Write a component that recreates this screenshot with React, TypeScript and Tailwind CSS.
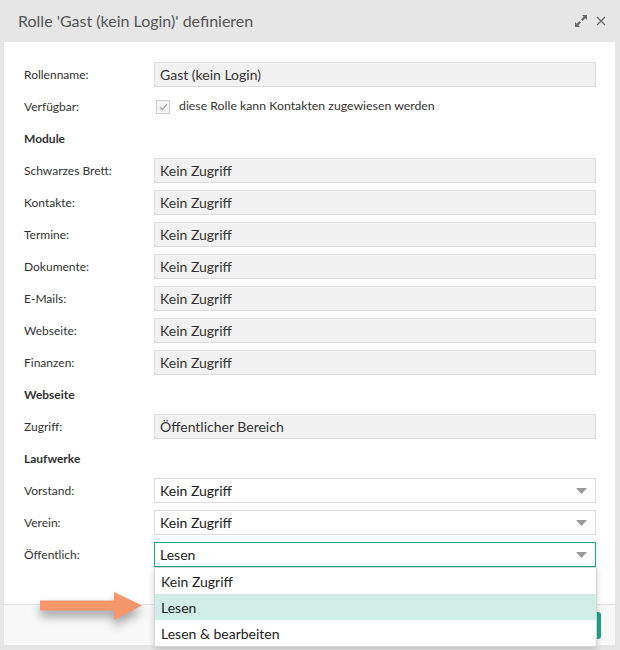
import React from "react";

const font = { fontFamily: "Lato, 'Open Sans', sans-serif" };

const moduleRows = [
  "Schwarzes Brett",
  "Kontakte",
  "Termine",
  "Dokumente",
  "E-Mails",
  "Webseite",
  "Finanzen",
];

function Label({ children }: { children: React.ReactNode }) {
  return <div className="w-[130px] shrink-0 text-[12px] text-[#333]">{children}</div>;
}

function ReadOnlyField({ label, value }: { label: string; value: string }) {
  return (
    <div className="flex h-[25px] items-center">
      <Label>{label}:</Label>
      <div className="flex h-[25px] flex-1 items-center border border-[#dcdcdc] bg-[#f1f1f1] px-[5px] text-[14px] text-[#333]">
        {value}
      </div>
    </div>
  );
}

function Heading({ children }: { children: React.ReactNode }) {
  return (
    <div className="flex h-[25px] items-center text-[12px] font-bold text-[#333]">
      {children}
    </div>
  );
}

function Caret() {
  return (
    <svg width="11" height="6" viewBox="0 0 11 6" className="mr-[4px]">
      <path d="M0 0 H11 L5.5 6 Z" fill="#9a9a9a" />
    </svg>
  );
}

function SelectField({
  label,
  value,
  active,
  children,
}: {
  label: string;
  value: string;
  active?: boolean;
  children?: React.ReactNode;
}) {
  return (
    <div className="flex h-[25px] items-center">
      <Label>{label}:</Label>
      <div className="relative flex-1">
        <div
          className={
            "flex h-[25px] items-center justify-between border bg-white pl-[5px] pr-[4px] text-[14px] text-[#222] " +
            (active ? "border-[#1aa98a]" : "border-[#dcdcdc]")
          }
        >
          <span>{value}</span>
          <Caret />
        </div>
        {children}
      </div>
    </div>
  );
}

export default function App() {
  const options = ["Kein Zugriff", "Lesen", "Lesen & bearbeiten"];

  return (
    <div className="h-[650px] w-[620px] bg-[#e6e6e6] pl-[4px] pr-[5px]" style={font}>
      {/* header */}
      <div className="flex h-[42px] items-center justify-between pl-[14px] pr-[9px]">
        <div className="text-[16px] text-[#555]">Rolle 'Gast (kein Login)' definieren</div>
        <div className="flex items-center gap-[8px]">
          <svg width="14" height="14" viewBox="0 0 14 14">
            <path d="M8 1 H13 V6 L11.3 4.3 L8.6 7 L7 5.4 L9.7 2.7 Z" fill="#6a6a6a" />
            <path d="M6 13 H1 V8 L2.7 9.7 L5.4 7 L7 8.6 L4.3 11.3 Z" fill="#6a6a6a" />
          </svg>
          <svg width="10" height="10" viewBox="0 0 10 10">
            <path d="M1 1 L9 9 M9 1 L1 9" stroke="#6a6a6a" strokeWidth="1.3" />
          </svg>
        </div>
      </div>

      {/* body */}
      <div className="relative bg-white">
        <div className="flex flex-col gap-[7px] pb-[37px] pl-[20px] pr-[19px] pt-[20px]">
          <ReadOnlyField label="Rollenname" value="Gast (kein Login)" />
          <div className="flex h-[25px] items-center">
            <Label>Verfügbar:</Label>
            <div className="flex items-center gap-[9px] pl-[2px] text-[12.3px] text-[#333]">
              <div className="flex h-[14px] w-[14px] items-center justify-center border border-[#cfcfcf] bg-[#f4f4f4]">
                <svg width="9" height="8" viewBox="0 0 9 8">
                  <path d="M1 4.2 L3.4 6.4 L8 1.4" stroke="#a0a0a0" strokeWidth="1.3" fill="none" />
                </svg>
              </div>
              <span>diese Rolle kann Kontakten zugewiesen werden</span>
            </div>
          </div>

          <Heading>Module</Heading>
          {moduleRows.map((m) => (
            <ReadOnlyField key={m} label={m} value="Kein Zugriff" />
          ))}

          <Heading>Webseite</Heading>
          <ReadOnlyField label="Zugriff" value="Öffentlicher Bereich" />

          <Heading>Laufwerke</Heading>
          <SelectField label="Vorstand" value="Kein Zugriff" />
          <SelectField label="Verein" value="Kein Zugriff" />
          <SelectField label="Öffentlich" value="Lesen" active>
            <div className="absolute left-0 right-[-1px] top-[25px] z-10 border border-[#d6d6d6] bg-white shadow-[0_2px_6px_rgba(0,0,0,0.18)]">
              {options.map((o) => (
                <div
                  key={o}
                  className={
                    "flex h-[26px] items-center px-[6px] text-[14px] text-[#222] " +
                    (o === "Lesen" ? "bg-[#d0ede8]" : "")
                  }
                >
                  {o}
                </div>
              ))}
            </div>
          </SelectField>
        </div>

        {/* footer */}
        <div className="flex h-[41px] items-center justify-end border-t border-[#e3e3e3] bg-[#f8f8f8] pr-[14px]">
          <div className="h-[27px] w-[90px] rounded-[3px] bg-[#1aa98a]" />
        </div>

        {/* pointer arrow */}
        <div className="absolute left-[36px] top-[548px] drop-shadow-[0_6px_5px_rgba(0,0,0,0.35)]">
          <svg width="104" height="32" viewBox="0 0 104 32">
            <path d="M0 10.5 H74 V2 L102 15.5 L74 30 V20.5 H0 Z" fill="#f7956b" />
          </svg>
        </div>
      </div>
    </div>
  );
}
